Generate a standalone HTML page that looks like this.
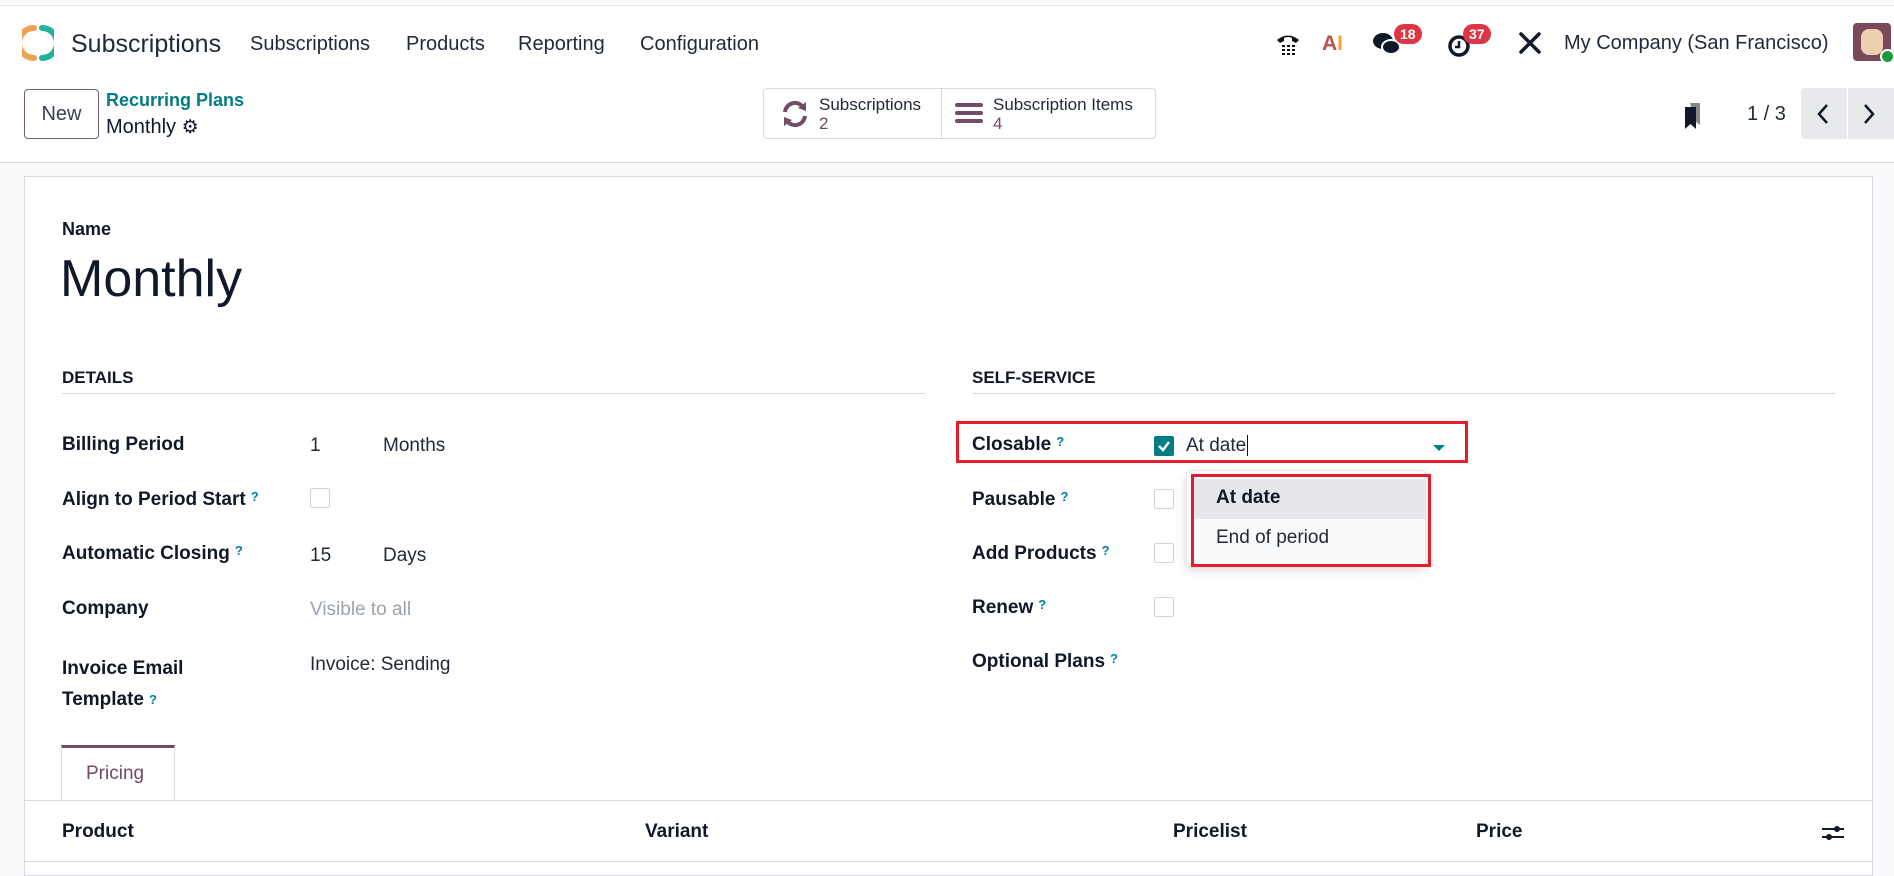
<!DOCTYPE html>
<html><head><meta charset="utf-8"><style>
*{box-sizing:border-box;margin:0;padding:0}
body{width:1894px;height:864px;overflow:hidden;font-family:"Liberation Sans",sans-serif;color:#1f2937;background:#f9fafb;position:relative}
.a{position:absolute;white-space:nowrap}
.nav{position:absolute;left:0;top:5px;width:1894px;height:60px;background:#fff;border-top:1px solid #e5e7eb}
.cp{position:absolute;left:0;top:65px;width:1894px;height:98px;background:#fff;border-bottom:1px solid #d8dadd}
.m{font-size:20px;color:#1f2937;top:30px}
.lbl{font-size:19px;font-weight:bold;color:#111827}
.val{font-size:19px;color:#1f2937}
.q{color:#0180a5;font-size:13px;vertical-align:top;margin-left:5px;font-weight:bold}
.cb{position:absolute;width:20px;height:20px;border:1px solid #d1d5db;background:#fff;border-radius:2px}
.badge{position:absolute;background:#dc3545;color:#fff;font-size:14px;font-weight:bold;border-radius:10px;padding:2px 6px;line-height:16px}
</style></head><body>
<div class="nav">
 <svg class="a" style="left:22px;top:19px" width="32" height="36" viewBox="0 0 32 36"><path d="M12 3 A14 14 0 0 0 12 33" stroke="#f0a050" stroke-width="6" fill="none" stroke-linecap="round"/><path d="M20 3 A14 14 0 0 1 20 33" stroke="#1fb39a" stroke-width="6" fill="none" stroke-linecap="round"/></svg>
 <div class="a" style="left:71px;top:24px;font-size:25px;color:#1f2937">Subscriptions</div>
 <div class="a m" style="left:250px;top:27px">Subscriptions</div>
 <div class="a m" style="left:406px;top:27px">Products</div>
 <div class="a m" style="left:518px;top:27px">Reporting</div>
 <div class="a m" style="left:640px;top:27px">Configuration</div>
 <svg class="a" style="left:1275px;top:25px" width="26" height="26" viewBox="0 0 26 26"><path d="M2 9 Q13 0 24 9 L21 12 L17 10 L17 7 Q13 5 9 7 L9 10 L5 12Z" fill="#111"/><g fill="#111"><rect x="7" y="14" width="3" height="2"/><rect x="12" y="14" width="3" height="2"/><rect x="17" y="14" width="3" height="2"/><rect x="7" y="18" width="3" height="2"/><rect x="12" y="18" width="3" height="2"/><rect x="17" y="18" width="3" height="2"/><rect x="7" y="22" width="3" height="2"/><rect x="12" y="22" width="3" height="2"/><rect x="17" y="22" width="3" height="2"/></g></svg>
 <div class="a" style="left:1322px;top:26px;font-size:21px;font-weight:bold;color:#c0504d">A<span style="color:#f5a623">I</span></div>
 <svg class="a" style="left:1372px;top:25px" width="30" height="26" viewBox="0 0 30 26"><ellipse cx="11" cy="10" rx="10" ry="8" fill="#111827"/><ellipse cx="19" cy="16" rx="9" ry="7" fill="#111827" stroke="#fff" stroke-width="2"/></svg>
 <div class="badge" style="left:1394px;top:18px">18</div>
 <svg class="a" style="left:1447px;top:27px" width="26" height="26" viewBox="0 0 26 26"><circle cx="12" cy="13" r="9" stroke="#111827" stroke-width="3.5" fill="none"/><path d="M12 8v6h-4" stroke="#111827" stroke-width="2.5" fill="none"/></svg>
 <div class="badge" style="left:1463px;top:18px">37</div>
 <svg class="a" style="left:1518px;top:25px" width="24" height="24" viewBox="0 0 24 24"><path d="M3 3 L21 21 M21 3 L3 21" stroke="#111827" stroke-width="3.5" stroke-linecap="round"/></svg>
 <div class="a" style="left:1564px;top:26px;font-size:20px">My Company (San Francisco)</div>
 <div class="a" style="left:1853px;top:17px;width:38px;height:38px;background:#7a4a5a;border-radius:4px"><div style="position:absolute;left:8px;top:6px;width:22px;height:26px;background:#f0d0b0;border-radius:8px"></div><div style="position:absolute;right:-4px;bottom:-3px;width:15px;height:15px;border-radius:50%;background:#1a9a3a;border:2px solid #fff"></div></div>
</div>
<div class="cp">
 <div class="a" style="left:24px;top:24px;width:75px;height:50px;border:1px solid #7a5a70;border-radius:4px;font-size:20px;text-align:center;line-height:48px;color:#374151">New</div>
 <div class="a" style="left:106px;top:25px;font-size:18px;font-weight:bold;color:#017e84">Recurring Plans</div>
 <div class="a" style="left:106px;top:51px;font-size:20px;color:#111827">Monthly <span style="font-size:19px">⚙</span></div>
 <div class="a" style="left:763px;top:23px;width:393px;height:51px;border:1px solid #d8dadd;border-radius:4px"></div>
 <div class="a" style="left:941px;top:23px;width:1px;height:51px;background:#d8dadd"></div>
 <svg class="a" style="left:780px;top:34px" width="30" height="30" viewBox="0 0 30 30"><path d="M5 13 A10 10 0 0 1 23 8 M25 17 A10 10 0 0 1 7 22" stroke="#714b67" stroke-width="4" fill="none"/><path d="M18 9 L26 3 L26 12Z M12 21 L4 27 L4 18Z" fill="#714b67"/></svg>
 <div class="a" style="left:819px;top:30px;font-size:17px;line-height:19px">Subscriptions<br><span style="color:#714b67">2</span></div>
 <svg class="a" style="left:955px;top:36px" width="28" height="24" viewBox="0 0 28 24"><rect y="2" width="28" height="4" rx="2" fill="#714b67"/><rect y="10" width="28" height="4" rx="2" fill="#714b67"/><rect y="18" width="28" height="4" rx="2" fill="#714b67"/></svg>
 <div class="a" style="left:993px;top:30px;font-size:17px;line-height:19px">Subscription Items<br><span style="color:#714b67">4</span></div>
 <svg class="a" style="left:1682px;top:36px" width="22" height="28" viewBox="0 0 22 28"><path d="M8 2h10v22l-5-4z" fill="#888"/><path d="M3 6h11v22l-5.5-5L3 28z" fill="#111827"/></svg>
 <div class="a" style="left:1747px;top:38px;font-size:20px">1 / 3</div>
 <div class="a" style="left:1801px;top:23px;width:93px;height:51px;background:#e7e9ed;border-radius:4px 0 0 4px"></div>
 <div class="a" style="left:1847px;top:23px;width:1px;height:51px;background:#fff"></div>
 <svg class="a" style="left:1815px;top:37px" width="16" height="24" viewBox="0 0 16 24"><path d="M12 3L4 12l8 9" stroke="#111827" stroke-width="2.5" fill="none"/></svg>
 <svg class="a" style="left:1861px;top:37px" width="16" height="24" viewBox="0 0 16 24"><path d="M4 3l8 9-8 9" stroke="#111827" stroke-width="2.5" fill="none"/></svg>
</div>
<div class="a" style="left:24px;top:176px;width:1849px;height:700px;background:#fff;border:1px solid #d8dadd"></div>
<div class="a lbl" style="left:62px;top:219px;font-size:18px">Name</div>
<div class="a" style="left:60px;top:249px;font-size:52px;color:#111827">Monthly</div>
<div class="a lbl" style="left:62px;top:368px;font-size:17px">DETAILS</div>
<div class="a" style="left:62px;top:393px;width:863px;height:1px;background:#d8dadd"></div>
<div class="a lbl" style="left:972px;top:368px;font-size:17px">SELF-SERVICE</div>
<div class="a" style="left:972px;top:393px;width:864px;height:1px;background:#d8dadd"></div>
<div class="a lbl" style="left:62px;top:434px">Billing Period</div>
<div class="a val" style="left:310px;top:435px">1</div><div class="a val" style="left:383px;top:435px">Months</div>
<div class="a lbl" style="left:62px;top:489px">Align to Period Start<span class="q">?</span></div>
<div class="cb" style="left:310px;top:488px"></div>
<div class="a lbl" style="left:62px;top:543px">Automatic Closing<span class="q">?</span></div>
<div class="a val" style="left:310px;top:545px">15</div><div class="a val" style="left:383px;top:545px">Days</div>
<div class="a lbl" style="left:62px;top:598px">Company</div>
<div class="a val" style="left:310px;top:599px;color:#9ca3af">Visible to all</div>
<div class="a lbl" style="left:62px;top:653px;line-height:31px">Invoice Email<br>Template<span class="q">?</span></div>
<div class="a val" style="left:310px;top:654px">Invoice: Sending</div>
<div class="a lbl" style="left:972px;top:434px">Closable<span class="q">?</span></div>
<div class="a lbl" style="left:972px;top:489px">Pausable<span class="q">?</span></div>
<div class="a lbl" style="left:972px;top:543px">Add Products<span class="q">?</span></div>
<div class="a lbl" style="left:972px;top:597px">Renew<span class="q">?</span></div>
<div class="a lbl" style="left:972px;top:651px">Optional Plans<span class="q">?</span></div>
<div class="cb" style="left:1154px;top:436px;background:#017e84;border-color:#017e84"><svg width="18" height="18" viewBox="0 0 18 18"><path d="M4 9l4 4 6-8" stroke="#fff" stroke-width="2.5" fill="none"/></svg></div>
<div class="cb" style="left:1154px;top:489px"></div>
<div class="cb" style="left:1154px;top:543px"></div>
<div class="cb" style="left:1154px;top:597px"></div>
<div class="a val" style="left:1186px;top:435px">At date<span style="border-left:1px solid #111;margin-left:1px"></span></div>
<svg class="a" style="left:1432px;top:444px" width="14" height="8" viewBox="0 0 14 8"><path d="M1 1h12L7 7z" fill="#017e84"/></svg>
<div class="a" style="left:956px;top:421px;width:512px;height:42px;border:3px solid #e31e2a"></div>
<div class="a" style="left:1186px;top:470px;width:240px;height:96px;background:#f9fafb;border:1px solid #e5e7eb;border-radius:4px;box-shadow:0 4px 10px rgba(0,0,0,.15)"></div>
<div class="a" style="left:1193px;top:479px;width:233px;height:40px;background:#e5e7eb"></div>
<div class="a" style="left:1216px;top:487px;font-size:19px;font-weight:bold;color:#111827">At date</div>
<div class="a" style="left:1216px;top:527px;font-size:19px;color:#1f2937">End of period</div>
<div class="a" style="left:1191px;top:474px;width:240px;height:93px;border:3px solid #e31e2a"></div>
<div class="a" style="left:61px;top:745px;width:114px;height:56px;border:1px solid #d8dadd;border-bottom:none;border-top:3px solid #714b67;background:#fff"></div>
<div class="a" style="left:86px;top:763px;font-size:19px;color:#714b67">Pricing</div>
<div class="a" style="left:25px;top:800px;width:1847px;height:1px;background:#d8dadd"></div>
<div class="a lbl" style="left:62px;top:821px">Product</div>
<div class="a lbl" style="left:645px;top:821px">Variant</div>
<div class="a lbl" style="left:1173px;top:821px">Pricelist</div>
<div class="a lbl" style="left:1476px;top:821px">Price</div>
<svg class="a" style="left:1822px;top:823px" width="22" height="20" viewBox="0 0 22 20"><path d="M0 6h22M0 14h22" stroke="#111827" stroke-width="2"/><circle cx="15" cy="6" r="3" fill="#111827"/><circle cx="7" cy="14" r="3" fill="#111827"/></svg>
<div class="a" style="left:25px;top:861px;width:1847px;height:1px;background:#d8dadd"></div>
</body></html>
